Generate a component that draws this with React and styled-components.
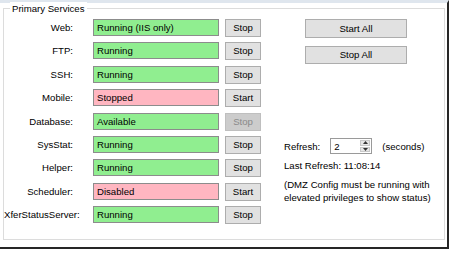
import React from 'react';
import styled, { createGlobalStyle } from 'styled-components';

const Global = createGlobalStyle`
  html, body { margin: 0; padding: 0; background: #fff; }
  body {
    font-family: "Liberation Sans", Arial, sans-serif;
    font-size: 9.6px;
    color: #000;
  }
`

const Frame = styled.div`
  width: 449px;
  height: 249px;
  box-sizing: border-box;
  background: #fff;
  border-top: 3px solid #dfe6ee;
  border-right: 2px solid #262626;
  border-bottom: 2px solid #262626;
  padding: 5px 0 0 3px;
`

const Group = styled.div`
  position: relative;
  width: 442px;
  height: 232px;
  box-sizing: border-box;
  border: 1px solid #dcdcdc;
  display: flex;
  padding-top: 10px;
`

const Legend = styled.span`
  position: absolute;
  top: -7px;
  left: 6px;
  padding: 0 2px;
  background: #fff;
  line-height: 13px;
`

const Services = styled.div`
  display: grid;
  grid-template-columns: 79px 126px 36px;
  grid-auto-rows: 23.375px;
  align-items: start;
`

const Label = styled.div`
  text-align: right;
  line-height: 17px;
  margin-right: 10px;
  white-space: nowrap;
`

const Status = styled.div`
  margin-left: 10px;
  width: 126px;
  height: 17px;
  box-sizing: border-box;
  border: 1px solid #8c8c8c;
  background: ${p => (p.$ok ? '#90ee90' : '#ffb6c1')};
  padding-left: 3px;
  line-height: 15px;
  white-space: nowrap;
`

const Button = styled.button`
  font: inherit;
  color: ${p => (p.disabled ? '#8a8a8a' : '#000')};
  background: ${p => (p.disabled ? '#cccccc' : '#e1e1e1')};
  border: 1px solid ${p => (p.disabled ? '#bfbfbf' : '#adadad')};
  box-sizing: border-box;
  padding: 0;
  width: ${p => p.$w || 36}px;
  height: ${p => p.$h || 18}px;
  line-height: 16px;
  text-align: center;
`

const RowButton = styled(Button)`
  margin-left: 16px;
`

const Side = styled.div`
  display: flex;
  flex-direction: column;
  margin-left: 39px;
`

const BigButton = styled(Button)`
  margin-left: 21px;
  margin-top: ${p => p.$mt || 0}px;
`

const RefreshRow = styled.div`
  display: flex;
  align-items: center;
  margin-top: 74px;
  height: 16px;
`

const Spinner = styled.div`
  display: flex;
  align-items: center;
  width: 42px;
  height: 16px;
  box-sizing: border-box;
  border: 1px solid #9a9a9a;
  margin: 0 10px;
  padding: 0 1px 0 3px;
`

const SpinValue = styled.span`
  flex: 1;
`

const SpinArrows = styled.div`
  display: flex;
  flex-direction: column;
  gap: 1px;
  width: 10px;
  height: 12px;
`

const Arrow = styled.div`
  flex: 1;
  background: #e6e6e6;
  border: 1px solid #c8c8c8;
  display: flex;
  align-items: center;
  justify-content: center;
`

const Info = styled.div`
  margin-top: ${p => p.$mt || 0}px;
  line-height: 13px;
  white-space: nowrap;
`

const services = [
  ['Web:', 'Running (IIS only)', true, 'Stop'],
  ['FTP:', 'Running', true, 'Stop'],
  ['SSH:', 'Running', true, 'Stop'],
  ['Mobile:', 'Stopped', false, 'Start'],
  ['Database:', 'Available', true, 'Stop', true],
  ['SysStat:', 'Running', true, 'Stop'],
  ['Helper:', 'Running', true, 'Stop'],
  ['Scheduler:', 'Disabled', false, 'Start'],
  ['XferStatusServer:', 'Running', true, 'Stop'],
]

const Tri = ({ up }) => (
  <svg width="5" height="3" viewBox="0 0 5 3">
    <path d={up ? 'M2.5 0L5 3H0z' : 'M0 0h5L2.5 3z'} fill="#333" />
  </svg>
)

export default function App() {
  return (
    <>
      <Global />
      <Frame>
        <Group>
          <Legend>Primary Services</Legend>
          <Services>
            {services.map(([name, status, ok, action, disabled]) => (
              <React.Fragment key={name}>
                <Label>{name}</Label>
                <Status $ok={ok}>{status}</Status>
                <RowButton disabled={disabled}>{action}</RowButton>
              </React.Fragment>
            ))}
          </Services>
          <Side>
            <BigButton $w={102} $h={19}>Start All</BigButton>
            <BigButton $w={102} $mt={8}>Stop All</BigButton>
            <RefreshRow>
              <span>Refresh:</span>
              <Spinner>
                <SpinValue>2</SpinValue>
                <SpinArrows>
                  <Arrow><Tri up /></Arrow>
                  <Arrow><Tri /></Arrow>
                </SpinArrows>
              </Spinner>
              <span>(seconds)</span>
            </RefreshRow>
            <Info $mt={5}>Last Refresh: 11:08:14</Info>
            <Info $mt={6}>(DMZ Config must be running with<br />elevated privileges to show status)</Info>
          </Side>
        </Group>
      </Frame>
    </>
  )
}
